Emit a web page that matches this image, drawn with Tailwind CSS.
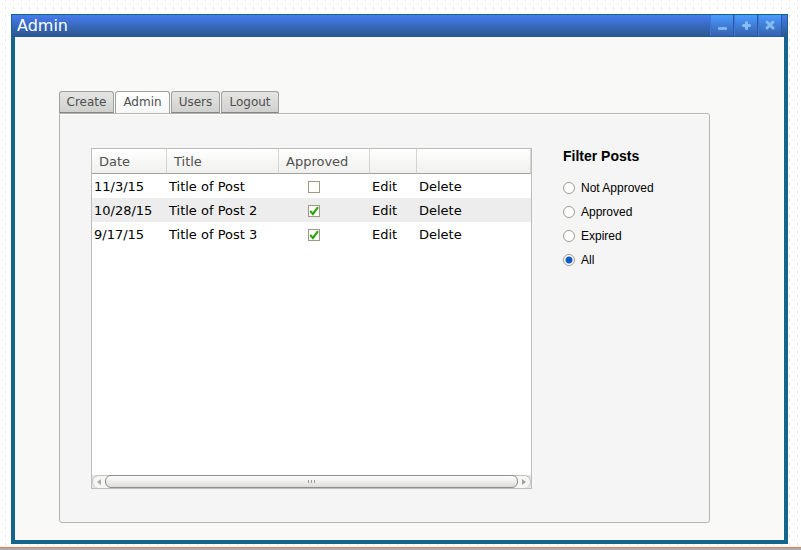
<!DOCTYPE html>
<html lang="en">
<head>
<meta charset="utf-8">
<title>Admin</title>
<script src="https://cdn.jsdelivr.net/npm/@tailwindcss/browser@4"></script>
</head>
<body class="flex min-h-screen flex-col bg-white font-['DejaVu_Sans',sans-serif] text-black">
<div class="flex flex-1 flex-col bg-[conic-gradient(from_270deg_at_1px_2px,#e2e2e2_90deg,transparent_0)] bg-[length:8px_8px] bg-[position:5px_7px] pt-[14px] pr-[13px] pb-[3px] pl-[11px]">
  <main class="flex flex-1 flex-col bg-[#13658e]">
    <header class="mx-px mt-px flex h-[22px] items-center justify-between bg-linear-to-b from-[#467cf0] to-[#2a568c] pl-[5px]">
      <h1 class="text-base leading-[22px] text-white">Admin</h1>
      <div class="mr-[5px] flex h-full gap-px bg-[#2c58a8] pr-px pb-px">
        <button type="button" aria-label="Minimize" class="flex w-[23px] items-center justify-center border-l border-[#3f74d8] bg-linear-to-b from-[#4a9bff] to-[#3462ae]">
          <svg width="22" height="21" viewBox="0 0 22 21"><rect x="7" y="12" width="9" height="3" rx="1" fill="#7fb5ea"/></svg>
        </button>
        <button type="button" aria-label="Maximize" class="flex w-[23px] items-center justify-center border-l border-[#3f74d8] bg-linear-to-b from-[#4a9bff] to-[#3462ae]">
          <svg width="22" height="21" viewBox="0 0 22 21"><path d="M11.500 7.500v6M8.500 10.500h6" stroke="#86bcf0" stroke-width="3" stroke-linecap="round"/></svg>
        </button>
        <button type="button" aria-label="Close" class="flex w-[23px] items-center justify-center border-l border-[#3f74d8] bg-linear-to-b from-[#4a9bff] to-[#3462ae]">
          <svg width="22" height="21" viewBox="0 0 22 21"><path d="M8 7l6 6M14 7l-6 6" stroke="#86bcf0" stroke-width="3" stroke-linecap="round"/></svg>
        </button>
      </div>
    </header>
    <div class="mx-1 mb-1 flex flex-1 flex-col bg-[#f9f9f7] pt-[54px] pr-[74px] pb-[17px] pl-[44px]">
      <nav role="tablist" aria-label="Sections" class="flex gap-px text-xs leading-[20px] text-[#4f4f4f]">
        <button type="button" role="tab" class="h-[22px] w-[55px] rounded-t-[3px] border border-[#a09f9c] border-b-[#858585] bg-linear-to-b from-[#e5e5e3] to-[#d0d0ce]">Create</button>
        <button type="button" role="tab" aria-selected="true" class="-mb-px h-[23px] w-[55px] rounded-t-[3px] border border-b-0 border-[#a09f9c] bg-linear-to-b from-white to-[#f7f7f7] pb-[2px]">Admin</button>
        <button type="button" role="tab" class="h-[22px] w-[49px] rounded-t-[3px] border border-[#a09f9c] border-b-[#858585] bg-linear-to-b from-[#e5e5e3] to-[#d0d0ce]">Users</button>
        <button type="button" role="tab" class="h-[22px] w-[58px] rounded-t-[3px] border border-[#a09f9c] border-b-[#858585] bg-linear-to-b from-[#e5e5e3] to-[#d0d0ce]">Logout</button>
      </nav>
      <section class="flex flex-1 rounded-b-[3px] rounded-tr-[3px] border border-[#b5b4ae] bg-[#f5f5f5] pt-[34px] pr-[31px] pb-[33px] pl-[31px] shadow-[inset_0_1px_0_#fff]">
        <div class="flex flex-1 flex-col border border-[#bebdba] bg-white">
          <table class="w-full table-fixed border-separate border-spacing-0 text-left text-[13px] leading-[22px]">
            <colgroup><col class="w-[75px]"><col class="w-[112px]"><col class="w-[91px]"><col class="w-[47px]"><col></colgroup>
            <thead>
              <tr class="bg-linear-to-b from-white to-[#efefed] text-[#505050]">
                <th class="h-[25px] border-r border-b border-r-[#d5d4d1] border-b-[#a3a2a0] p-0 pt-[2px] pl-[7px] font-normal">Date</th>
                <th class="border-r border-b border-r-[#d5d4d1] border-b-[#a3a2a0] p-0 pt-[2px] pl-[7px] font-normal">Title</th>
                <th class="border-r border-b border-r-[#d5d4d1] border-b-[#a3a2a0] p-0 pt-[2px] pl-[7px] font-normal">Approved</th>
                <th aria-label="Edit" class="border-r border-b border-r-[#d5d4d1] border-b-[#a3a2a0] p-0"></th>
                <th aria-label="Delete" class="border-r border-b border-r-[#d5d4d1] border-b-[#a3a2a0] p-0"></th>
              </tr>
            </thead>
            <tbody>
              <tr>
                <td class="p-0 pt-[2px] pl-[2px]">11/3/15</td><td class="p-0 pt-[2px] pl-[2px]">Title of Post</td>
                <td class="p-0 pl-[29px]"><span class="grid h-6 items-center pt-[2px]"><input type="checkbox" aria-label="Approved: Title of Post" class="size-3 appearance-none border border-[#a39888] bg-white"></span></td>
                <td class="p-0 pt-[2px] pl-[2px]"><a href="#">Edit</a></td><td class="p-0 pt-[2px] pl-[2px]"><a href="#">Delete</a></td>
              </tr>
              <tr class="bg-[#ededed]">
                <td class="p-0 pt-[2px] pl-[2px]">10/28/15</td><td class="p-0 pt-[2px] pl-[2px]">Title of Post 2</td>
                <td class="p-0 pl-[29px]"><span class="grid h-6 items-center pt-[2px]"><input type="checkbox" checked aria-label="Approved: Title of Post 2" class="col-start-1 row-start-1 size-3 appearance-none border border-[#a39888] bg-white"><svg class="pointer-events-none col-start-1 row-start-1" width="12" height="12" viewBox="0 0 12 12" fill="none"><path d="M2.200 6L5 9L10 2.200" stroke="#2fa50c" stroke-width="2.200"/></svg></span></td>
                <td class="p-0 pt-[2px] pl-[2px]"><a href="#">Edit</a></td><td class="p-0 pt-[2px] pl-[2px]"><a href="#">Delete</a></td>
              </tr>
              <tr>
                <td class="p-0 pt-[2px] pl-[2px]">9/17/15</td><td class="p-0 pt-[2px] pl-[2px]">Title of Post 3</td>
                <td class="p-0 pl-[29px]"><span class="grid h-6 items-center pt-[2px]"><input type="checkbox" checked aria-label="Approved: Title of Post 3" class="col-start-1 row-start-1 size-3 appearance-none border border-[#a39888] bg-white"><svg class="pointer-events-none col-start-1 row-start-1" width="12" height="12" viewBox="0 0 12 12" fill="none"><path d="M2.200 6L5 9L10 2.200" stroke="#2fa50c" stroke-width="2.200"/></svg></span></td>
                <td class="p-0 pt-[2px] pl-[2px]"><a href="#">Edit</a></td><td class="p-0 pt-[2px] pl-[2px]"><a href="#">Delete</a></td>
              </tr>
            </tbody>
          </table>
          <div class="mt-auto flex h-[13px] bg-[#e4e4e2]">
            <div class="flex flex-1 rounded-full border border-b-0 border-[#c4c3c0] bg-[#f6f6f5]">
              <button type="button" aria-label="Scroll left" class="grid w-3 place-items-center"><svg width="4" height="6" viewBox="0 0 4 6"><path d="M4 0v6L0 3z" fill="#aaaaab"/></svg></button>
              <div class="-mt-px flex h-[13px] flex-1 items-center justify-center gap-[2px] rounded-[6px] border border-[#8e8d8b] bg-linear-to-b from-white to-[#dddcda]">
                <span class="h-[3px] w-px bg-[#999]"></span><span class="h-[3px] w-px bg-[#999]"></span><span class="h-[3px] w-px bg-[#999]"></span>
              </div>
              <button type="button" aria-label="Scroll right" class="grid w-3 place-items-center"><svg width="4" height="6" viewBox="0 0 4 6"><path d="M0 0v6L4 3z" fill="#a0a0a2"/></svg></button>
            </div>
          </div>
        </div>
        <fieldset class="ml-[31px] w-[115px] font-['Liberation_Sans',sans-serif] text-xs leading-6">
          <legend class="mb-[12px] text-sm leading-4 font-bold">Filter Posts</legend>
          <label class="flex items-center gap-[6px]"><input type="radio" name="filter" class="size-3 appearance-none rounded-full border border-[#a39c90] bg-white checked:bg-[radial-gradient(circle,#0a5cc4_3px,#fff_4px)]">Not Approved</label>
          <label class="flex items-center gap-[6px]"><input type="radio" name="filter" class="size-3 appearance-none rounded-full border border-[#a39c90] bg-white checked:bg-[radial-gradient(circle,#0a5cc4_3px,#fff_4px)]">Approved</label>
          <label class="flex items-center gap-[6px]"><input type="radio" name="filter" class="size-3 appearance-none rounded-full border border-[#a39c90] bg-white checked:bg-[radial-gradient(circle,#0a5cc4_3px,#fff_4px)]">Expired</label>
          <label class="flex items-center gap-[6px]"><input type="radio" name="filter" checked class="size-3 appearance-none rounded-full border border-[#a39c90] bg-white checked:bg-[radial-gradient(circle,#0a5cc4_3px,#fff_4px)]">All</label>
        </fieldset>
      </section>
    </div>
  </main>
</div>
<footer class="h-[3px] border-t border-[#ee7d55] bg-[#ababab]"></footer>
</body>
</html>
